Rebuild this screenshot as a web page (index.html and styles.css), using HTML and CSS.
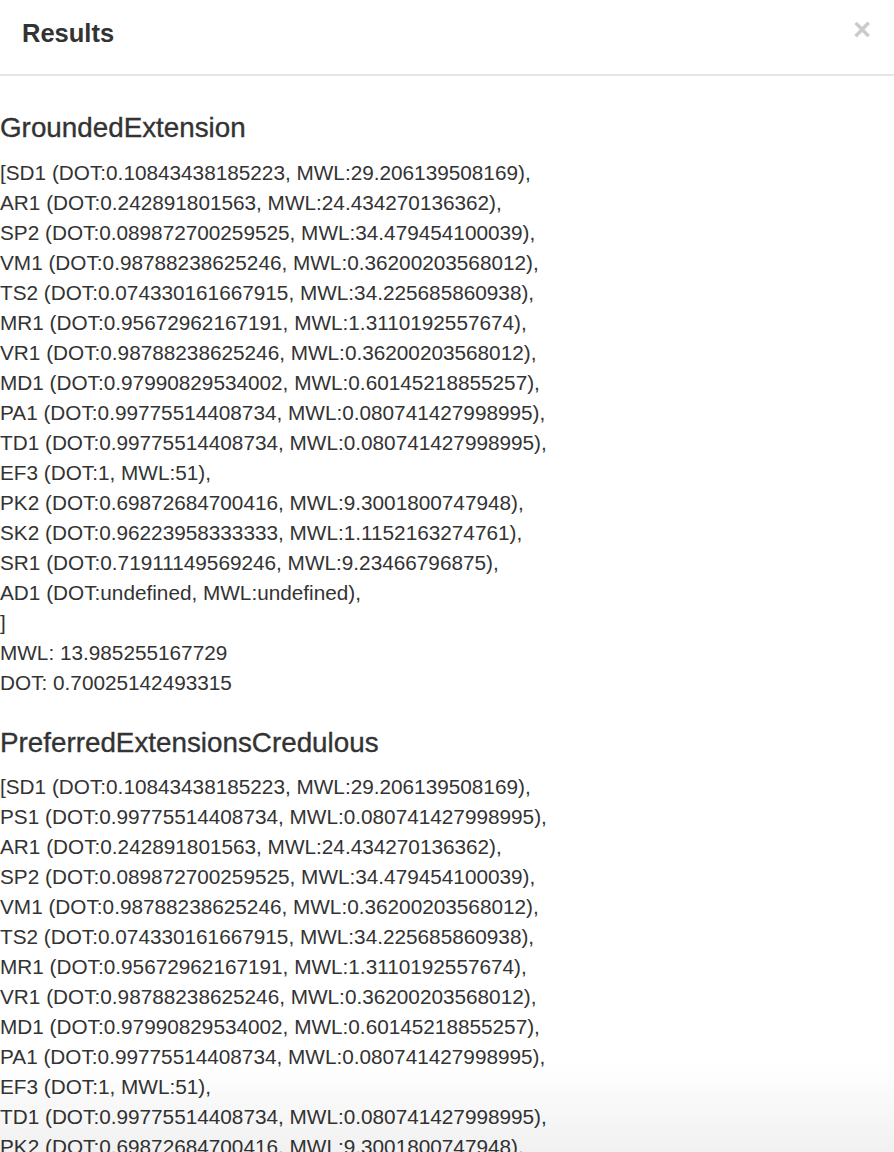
FILE: index.html
```html
<!DOCTYPE html>
<html lang="en">
<head>
<meta charset="utf-8">
<title>Results</title>
<link rel="stylesheet" href="styles.css">
</head>
<body>
<div class="modal">
  <div class="modal-header">
    <h4 class="modal-title">Results</h4>
    <button class="close" type="button" aria-label="Close">×</button>
  </div>
  <div class="modal-body">
    <section class="result">
      <h3 class="result-title">GroundedExtension</h3>
      <div class="result-lines">
        <div>[SD1 (DOT:0.10843438185223, MWL:29.206139508169),</div>
        <div>AR1 (DOT:0.242891801563, MWL:24.434270136362),</div>
        <div>SP2 (DOT:0.089872700259525, MWL:34.479454100039),</div>
        <div>VM1 (DOT:0.98788238625246, MWL:0.36200203568012),</div>
        <div>TS2 (DOT:0.074330161667915, MWL:34.225685860938),</div>
        <div>MR1 (DOT:0.95672962167191, MWL:1.3110192557674),</div>
        <div>VR1 (DOT:0.98788238625246, MWL:0.36200203568012),</div>
        <div>MD1 (DOT:0.97990829534002, MWL:0.60145218855257),</div>
        <div>PA1 (DOT:0.99775514408734, MWL:0.080741427998995),</div>
        <div>TD1 (DOT:0.99775514408734, MWL:0.080741427998995),</div>
        <div>EF3 (DOT:1, MWL:51),</div>
        <div>PK2 (DOT:0.69872684700416, MWL:9.3001800747948),</div>
        <div>SK2 (DOT:0.96223958333333, MWL:1.1152163274761),</div>
        <div>SR1 (DOT:0.71911149569246, MWL:9.23466796875),</div>
        <div>AD1 (DOT:undefined, MWL:undefined),</div>
        <div>]</div>
        <div>MWL: 13.985255167729</div>
        <div>DOT: 0.70025142493315</div>
      </div>
    </section>
    <section class="result">
      <h3 class="result-title">PreferredExtensionsCredulous</h3>
      <div class="result-lines">
        <div>[SD1 (DOT:0.10843438185223, MWL:29.206139508169),</div>
        <div>PS1 (DOT:0.99775514408734, MWL:0.080741427998995),</div>
        <div>AR1 (DOT:0.242891801563, MWL:24.434270136362),</div>
        <div>SP2 (DOT:0.089872700259525, MWL:34.479454100039),</div>
        <div>VM1 (DOT:0.98788238625246, MWL:0.36200203568012),</div>
        <div>TS2 (DOT:0.074330161667915, MWL:34.225685860938),</div>
        <div>MR1 (DOT:0.95672962167191, MWL:1.3110192557674),</div>
        <div>VR1 (DOT:0.98788238625246, MWL:0.36200203568012),</div>
        <div>MD1 (DOT:0.97990829534002, MWL:0.60145218855257),</div>
        <div>PA1 (DOT:0.99775514408734, MWL:0.080741427998995),</div>
        <div>EF3 (DOT:1, MWL:51),</div>
        <div>TD1 (DOT:0.99775514408734, MWL:0.080741427998995),</div>
        <div>PK2 (DOT:0.69872684700416, MWL:9.3001800747948),</div>
        <div>SK2 (DOT:0.96223958333333, MWL:1.1152163274761),</div>
        <div>SR1 (DOT:0.71911149569246, MWL:9.23466796875),</div>
      </div>
    </section>
  </div>
  <div class="fade-bottom"></div>
</div>
</body>
</html>
```

FILE: styles.css
```css
html, body {
  margin: 0;
  padding: 0;
  background: #fff;
}

body {
  font-family: "Liberation Sans", Arial, Helvetica, sans-serif;
  color: #333;
  overflow: hidden;
}

.modal {
  position: relative;
  min-height: 1152px;
}

.modal-header {
  display: flex;
  justify-content: space-between;
  align-items: flex-start;
  padding: 15px 23px 23px 22px;
  border-bottom: 2px solid #e5e5e5;
}

.modal-title {
  margin: 0;
  font-size: 25.5px;
  font-weight: bold;
  line-height: 36px;
  color: #333;
}

.close {
  margin: -1px 0 0 0;
  padding: 0;
  border: 0;
  background: transparent;
  font-family: "Liberation Sans", Arial, sans-serif;
  font-size: 31px;
  font-weight: bold;
  line-height: 31px;
  color: #000;
  opacity: 0.2;
  cursor: pointer;
}

.modal-body {
  padding: 37px 0 0 0;
}

.result + .result {
  margin-top: 30px;
}

.result-title {
  margin: 0 0 14px 0;
  font-size: 27.8px;
  font-weight: normal;
  line-height: 1.1;
  color: #333;
  -webkit-text-stroke: 0.35px #333;
}

.result-lines {
  font-size: 20.75px;
  line-height: 30px;
  white-space: nowrap;
}

.fade-bottom {
  position: fixed;
  left: 0;
  right: 0;
  bottom: 0;
  height: 90px;
  pointer-events: none;
  background: linear-gradient(to bottom, rgba(0, 0, 0, 0), rgba(0, 0, 0, 0.055));
}
```
